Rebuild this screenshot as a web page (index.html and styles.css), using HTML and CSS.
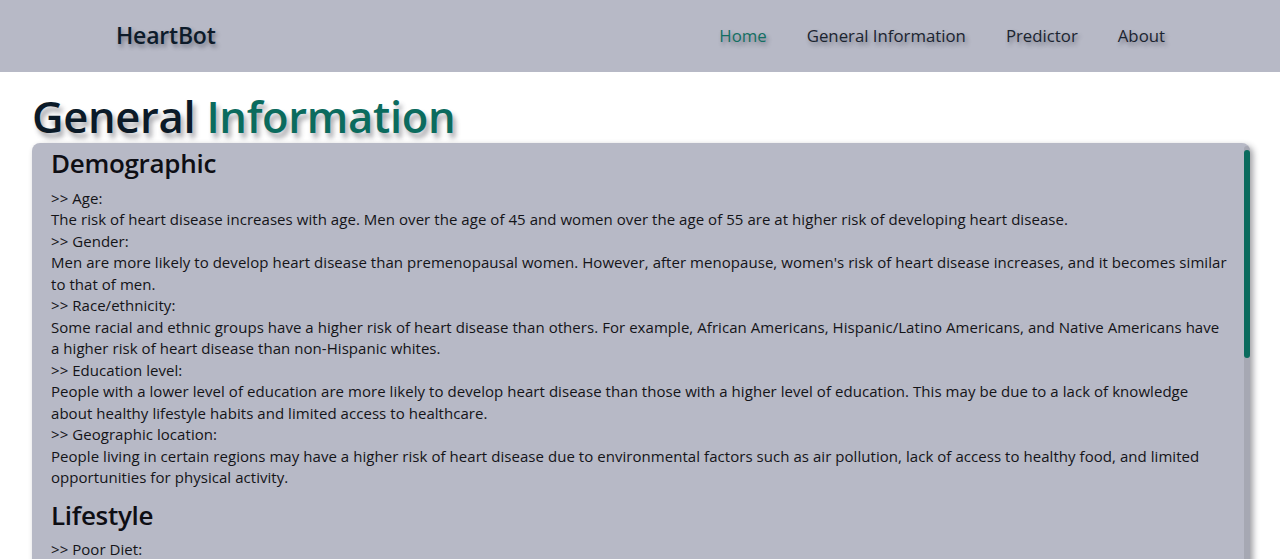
FILE: index.html
```html
<!DOCTYPE html>
<html lang="en">
<head>
<meta charset="utf-8">
<title>HeartBot - General Information</title>
<link rel="stylesheet" href="styles.css">
</head>
<body>
<header class="nav">
  <div class="brand">HeartBot</div>
  <nav class="links">
    <a class="link active" href="#">Home</a>
    <a class="link" href="#">General Information</a>
    <a class="link" href="#">Predictor</a>
    <a class="link" href="#">About</a>
  </nav>
</header>
<main class="page">
  <h1 class="title"><span class="dark">General</span> <span class="teal">Information</span></h1>
  <section class="card">
    <div class="content">
      <h2 class="section">Demographic</h2>
      <p class="label">&gt;&gt; Age:</p>
      <p>The risk of heart disease increases with age. Men over the age of 45 and women over the age of 55 are at higher risk of developing heart disease.</p>
      <p class="label">&gt;&gt; Gender:</p>
      <p>Men are more likely to develop heart disease than premenopausal women. However, after menopause, women's risk of heart disease increases, and it becomes similar to that of men.</p>
      <p class="label">&gt;&gt; Race/ethnicity:</p>
      <p>Some racial and ethnic groups have a higher risk of heart disease than others. For example, African Americans, Hispanic/Latino Americans, and Native Americans have a higher risk of heart disease than non-Hispanic whites.</p>
      <p class="label">&gt;&gt; Education level:</p>
      <p>People with a lower level of education are more likely to develop heart disease than those with a higher level of education. This may be due to a lack of knowledge about healthy lifestyle habits and limited access to healthcare.</p>
      <p class="label">&gt;&gt; Geographic location:</p>
      <p>People living in certain regions may have a higher risk of heart disease due to environmental factors such as air pollution, lack of access to healthy food, and limited opportunities for physical activity.</p>
      <h2 class="section">Lifestyle</h2>
      <p class="label">&gt;&gt; Poor Diet:</p>
    </div>
    <div class="scrollbar"><div class="thumb"></div></div>
  </section>
</main>
</body>
</html>
```
FILE: styles.css
```css
html, body {
  margin: 0;
  padding: 0;
}
body {
  font-family: "Open Sans", "Noto Sans", sans-serif;
  background: #ffffff;
  color: #111;
  overflow: hidden;
}
.nav {
  height: 72px;
  background: #b7b9c6;
  display: flex;
  align-items: center;
  justify-content: space-between;
  padding: 0 115px 0 116px;
}
.brand {
  font-size: 23px;
  font-weight: 600;
  color: #0d1b2a;
  text-shadow: 2px 3px 4px rgba(40, 45, 60, 0.45);
  letter-spacing: -0.2px;
  margin-top: -2px;
}
.links {
  display: flex;
  gap: 40px;
  margin-top: -2px;
}
.link {
  font-size: 16.8px;
  color: #1b2430;
  text-decoration: none;
  text-shadow: 2px 3px 4px rgba(40, 45, 60, 0.45);
}
.link.active {
  color: #136f63;
}
.page {
  padding: 0 30px 0 32px;
}
.title {
  margin: 21px 0 0 0;
  font-size: 43.5px;
  line-height: 48px;
  font-weight: 600;
  letter-spacing: -0.3px;
  text-shadow: 3px 5px 5px rgba(60, 60, 70, 0.45);
}
.title .dark { color: #0b1a28; }
.title .teal { color: #0b6b5e; }
.card {
  position: relative;
  margin-top: 2px;
  background: #b7b9c6;
  border-radius: 8px;
  box-shadow: 3px 3px 6px rgba(40, 40, 50, 0.45);
  height: 480px;
  overflow: hidden;
}
.content {
  padding: 3px 20px 0 19px;
}
.section {
  margin: 0 0 7.5px 0;
  font-size: 26px;
  line-height: 34px;
  font-weight: 600;
  color: #0e0e14;
  letter-spacing: -0.3px;
}
.content p {
  margin: 0;
  font-size: 15px;
  letter-spacing: 0.05px;
  line-height: 21.5px;
  color: #141418;
}
.content p + .section {
  margin-top: 9px;
}
.scrollbar {
  position: absolute;
  top: 3px;
  right: 0;
  bottom: 0;
  width: 6px;
  background: #a6a8b3;
  border-radius: 3px;
}
.thumb {
  margin-top: 4px;
  height: 208px;
  background: #0b6b5e;
  border-radius: 3px;
}
```
